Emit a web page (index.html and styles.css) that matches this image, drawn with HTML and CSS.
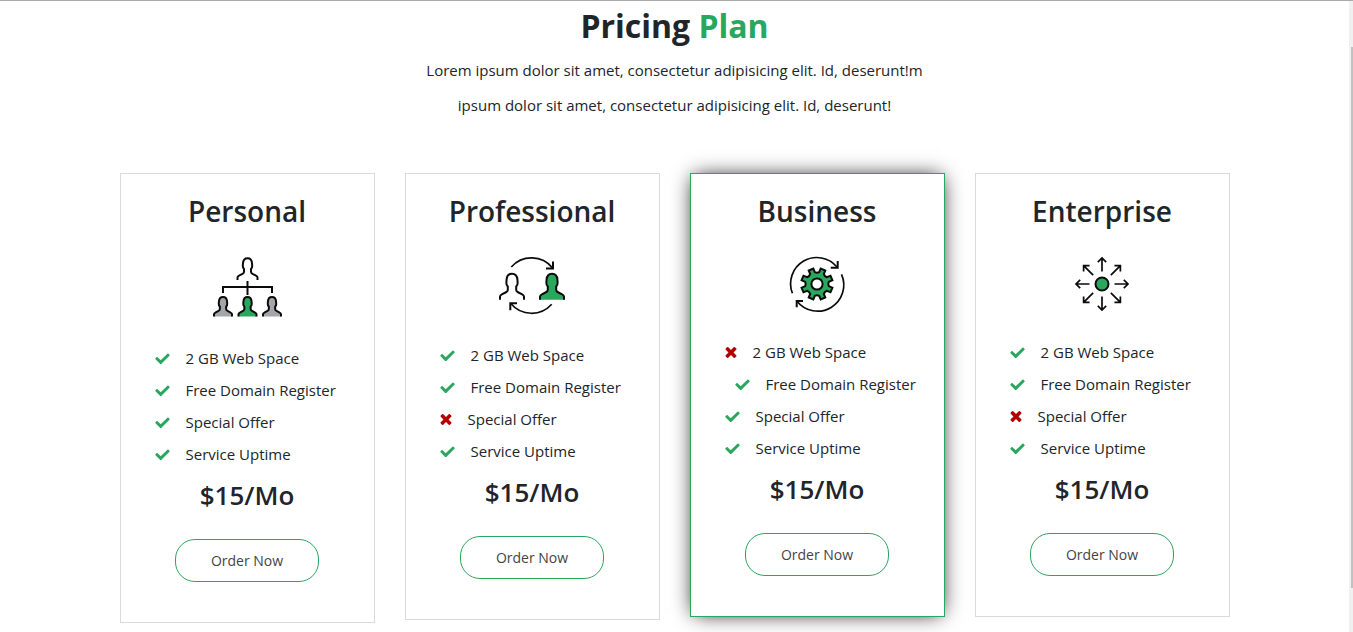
FILE: index.html
```html
<!DOCTYPE html>
<html lang="en">
<head>
<meta charset="utf-8">
<meta name="viewport" content="width=device-width, initial-scale=1">
<title>Pricing Plan</title>
<link rel="stylesheet" href="styles.css">
</head>
<body>
<svg class="sprite" aria-hidden="true">
  <symbol id="check" viewBox="0 50 512 392"><path fill="currentColor" d="M173.898 439.404l-166.4-166.4c-9.997-9.997-9.997-26.206 0-36.204l36.203-36.204c9.997-9.998 26.207-9.998 36.204 0L192 312.69 432.095 72.596c9.997-9.997 26.207-9.997 36.204 0l36.203 36.204c9.997 9.997 9.997 26.206 0 36.204l-294.4 294.401c-9.998 9.997-26.207 9.997-36.204-.001z"/></symbol>
  <symbol id="cross" viewBox="302 366 1188 1188"><path fill="currentColor" d="M1490 1322q0 40-28 68l-136 136q-28 28-68 28t-68-28l-294-294-294 294q-28 28-68 28t-68-28l-136-136q-28-28-28-68t28-68l294-294-294-294q-28-28-28-68t28-68l136-136q28-28 68-28t68 28l294 294 294-294q28-28 68-28t68 28l136 136q28 28 28 68t-28 68l-294 294 294 294q28 28 28 68z"/></symbol>
  <path id="person" vector-effect="non-scaling-stroke" d="M-10 0v-2.4q0-1.3 1.5-2l3.5-1.8q1.6-.8 1.5-2.3v-2.5q-1.3-1.2-1.2-3.2l.2-2.7q.4-4.8 4.5-4.8t4.5 4.8l.2 2.7q.1 2-1.2 3.2v2.5q-.1 1.5 1.5 2.3l3.5 1.8q1.5.7 1.5 2v2.4"/>
  <path id="ray" d="M0-12.5V-26M-4.2-21.8L0-26l4.2 4.2"/>
</svg>
<div class="page">
  <main class="container">
    <header class="intro">
      <h1 class="intro-title">Pricing <span class="accent">Plan</span></h1>
      <p class="intro-text">Lorem ipsum dolor sit amet, consectetur adipisicing elit. Id, deserunt!m<br>ipsum dolor sit amet, consectetur adipisicing elit. Id, deserunt!</p>
    </header>
    <div class="plans">
      <section class="plan">
        <h2 class="plan-name">Personal</h2>
        <svg class="plan-icon" width="70" height="61" viewBox="0 0 70 61" aria-hidden="true">
          <use href="#person" transform="translate(35.5 23)"/>
          <path d="M35.5 24v14M11 36v-6h49v6"/>
          <use href="#person" class="fill-gray" transform="translate(11 59.5) scale(.9)"/>
          <use href="#person" class="fill-green" transform="translate(35.5 59.5) scale(.9)"/>
          <use href="#person" class="fill-gray" transform="translate(60 59.5) scale(.9)"/>
        </svg>
        <ul class="features">
          <li class="feature"><svg class="yes" aria-hidden="true"><use href="#check"/></svg>2 GB Web Space</li>
          <li class="feature"><svg class="yes" aria-hidden="true"><use href="#check"/></svg>Free Domain Register</li>
          <li class="feature"><svg class="yes" aria-hidden="true"><use href="#check"/></svg>Special Offer</li>
          <li class="feature"><svg class="yes" aria-hidden="true"><use href="#check"/></svg>Service Uptime</li>
        </ul>
        <p class="price">$15/Mo</p>
        <button class="order" type="button">Order Now</button>
      </section>
      <section class="plan">
        <h2 class="plan-name">Professional</h2>
        <svg class="plan-icon" width="66" height="58" viewBox="0 0 66 58" aria-hidden="true">
          <use href="#person" transform="translate(13 42.7) scale(1.2)"/>
          <use href="#person" class="fill-green" transform="translate(53 42.7) scale(1.2)"/>
          <path class="thin" d="M12.3 10A27 27 0 0 1 53.6 11M52.7 47.3A27 27 0 0 1 11.8 46.5"/>
          <path d="M54 4.5v7h-7M18 46.2h-6.7v7"/>
        </svg>
        <ul class="features">
          <li class="feature"><svg class="yes" aria-hidden="true"><use href="#check"/></svg>2 GB Web Space</li>
          <li class="feature"><svg class="yes" aria-hidden="true"><use href="#check"/></svg>Free Domain Register</li>
          <li class="feature"><svg class="no" aria-hidden="true"><use href="#cross"/></svg>Special Offer</li>
          <li class="feature"><svg class="yes" aria-hidden="true"><use href="#check"/></svg>Service Uptime</li>
        </ul>
        <p class="price">$15/Mo</p>
        <button class="order" type="button">Order Now</button>
      </section>
      <section class="plan plan-active">
        <h2 class="plan-name">Business</h2>
        <svg class="plan-icon" width="54" height="55" viewBox="0 0 54 55" aria-hidden="true">
          <path class="fill-green" transform="translate(27 27)" d="M11.8 2.2L15.4 3.7L13.5 8.3L9.9 6.8Q7.6 7.6 6.8 9.9L8.3 13.5L3.7 15.4L2.2 11.8Q0 10.8-2.2 11.8L-3.7 15.4L-8.3 13.5L-6.8 9.9Q-7.6 7.6-9.9 6.8L-13.5 8.3L-15.4 3.7L-11.8 2.2Q-10.8 0-11.8-2.2L-15.4-3.7L-13.5-8.3L-9.9-6.8Q-7.6-7.6-6.8-9.9L-8.3-13.5L-3.7-15.4L-2.2-11.8Q0-10.8 2.2-11.8L3.7-15.4L8.3-13.5L6.8-9.9Q7.6-7.6 9.9-6.8L13.5-8.3L15.4-3.7L11.8-2.2Q10.8 0 11.8 2.2z"/>
          <circle class="fill-white" cx="27" cy="27" r="5.6"/>
          <path class="thin" d="M2.4 36.3A26.2 26.2 0 0 1 47.2 10.3M51.5 17.3A26.2 26.2 0 0 1 7 44.2"/>
          <path d="M47.7 4v6.7h-7M13 44H6.7v6.3"/>
        </svg>
        <ul class="features">
          <li class="feature"><svg class="no" aria-hidden="true"><use href="#cross"/></svg>2 GB Web Space</li>
          <li class="feature feature-indented"><svg class="yes" aria-hidden="true"><use href="#check"/></svg>Free Domain Register</li>
          <li class="feature"><svg class="yes" aria-hidden="true"><use href="#check"/></svg>Special Offer</li>
          <li class="feature"><svg class="yes" aria-hidden="true"><use href="#check"/></svg>Service Uptime</li>
        </ul>
        <p class="price">$15/Mo</p>
        <button class="order" type="button">Order Now</button>
      </section>
      <section class="plan">
        <h2 class="plan-name">Enterprise</h2>
        <svg class="plan-icon" width="54" height="55" viewBox="0 0 54 55" aria-hidden="true">
          <circle class="fill-green" cx="27" cy="27" r="6.5"/>
          <g class="thin" transform="translate(27 27)">
            <use href="#ray"/>
            <use href="#ray" transform="rotate(45)"/>
            <use href="#ray" transform="rotate(90)"/>
            <use href="#ray" transform="rotate(135)"/>
            <use href="#ray" transform="rotate(180)"/>
            <use href="#ray" transform="rotate(225)"/>
            <use href="#ray" transform="rotate(270)"/>
            <use href="#ray" transform="rotate(315)"/>
          </g>
        </svg>
        <ul class="features">
          <li class="feature"><svg class="yes" aria-hidden="true"><use href="#check"/></svg>2 GB Web Space</li>
          <li class="feature"><svg class="yes" aria-hidden="true"><use href="#check"/></svg>Free Domain Register</li>
          <li class="feature"><svg class="no" aria-hidden="true"><use href="#cross"/></svg>Special Offer</li>
          <li class="feature"><svg class="yes" aria-hidden="true"><use href="#check"/></svg>Service Uptime</li>
        </ul>
        <p class="price">$15/Mo</p>
        <button class="order" type="button">Order Now</button>
      </section>
    </div>
  </main>
  <div class="scroll-track"><div class="scroll-thumb"></div></div>
</div>
</body>
</html>
```
FILE: styles.css
```css
* {
  box-sizing: border-box;
}

body {
  margin: 0;
  background: #fff;
  color: #212529;
  font-family: "Open Sans", "Noto Sans", sans-serif;
  font-size: 15px;
}

h1,
h2,
p,
ul {
  margin: 0;
  padding: 0;
}

.sprite {
  position: absolute;
  width: 0;
  height: 0;
}

.page {
  display: flex;
  min-height: 100vh;
  border-top: 1px solid #aaa;
}

.container {
  flex: 1;
  max-width: 1140px;
  margin: 0 auto;
  padding: 6px 15px 8px;
}

.scroll-track {
  width: 4px;
  padding: 46px 0 44px 2px;
  background: #f0f0f0;
}

.scroll-thumb {
  height: 100%;
  background: #c1c1c1;
}

.intro {
  margin-bottom: 50px;
  text-align: center;
}

.intro-title {
  margin-bottom: 8px;
  font-size: 32px;
  font-weight: 700;
  line-height: 38px;
}

.accent {
  color: #28a75d;
}

.intro-text {
  line-height: 35px;
}

.plans {
  display: grid;
  grid-template-columns: repeat(4, 1fr);
  align-items: start;
  gap: 30px;
}

.plan {
  display: flex;
  flex-direction: column;
  align-items: center;
  padding: 20px 0 40px;
  border: 1px solid #d9dbdb;
}

.plan-active {
  border-color: #28a75d;
  box-shadow: 0 0 20px -4px #000;
}

.plan-name {
  margin-bottom: 29px;
  font-size: 28px;
  font-weight: 600;
  line-height: 34px;
}

.plan-icon {
  margin-bottom: 24px;
  overflow: visible;
  fill: none;
  stroke: #0b0b0b;
  stroke-width: 2;
}

.thin {
  stroke-width: 1.7;
}

.fill-green {
  fill: #28a75d;
}

.fill-gray {
  fill: #a5a6a9;
}

.fill-white {
  fill: #fff;
}

.features {
  align-self: stretch;
  padding-left: 34px;
  list-style: none;
}

.feature {
  display: flex;
  align-items: center;
  gap: 16px;
  line-height: 32px;
  white-space: nowrap;
}

.feature-indented {
  padding-left: 10px;
}

.yes {
  width: 15px;
  height: 11px;
  color: #28a75d;
}

.no {
  width: 12px;
  height: 11px;
  color: #b40000;
}

.price {
  margin: 10px 0 28px;
  font-size: 26px;
  font-weight: 600;
  line-height: 31px;
}

.order {
  padding: 10px 35px;
  border: 1px solid #28a75d;
  border-radius: 20px;
  background: none;
  color: #444;
  font: 14px/21px "Open Sans", "Noto Sans", sans-serif;
  cursor: pointer;
}
```
